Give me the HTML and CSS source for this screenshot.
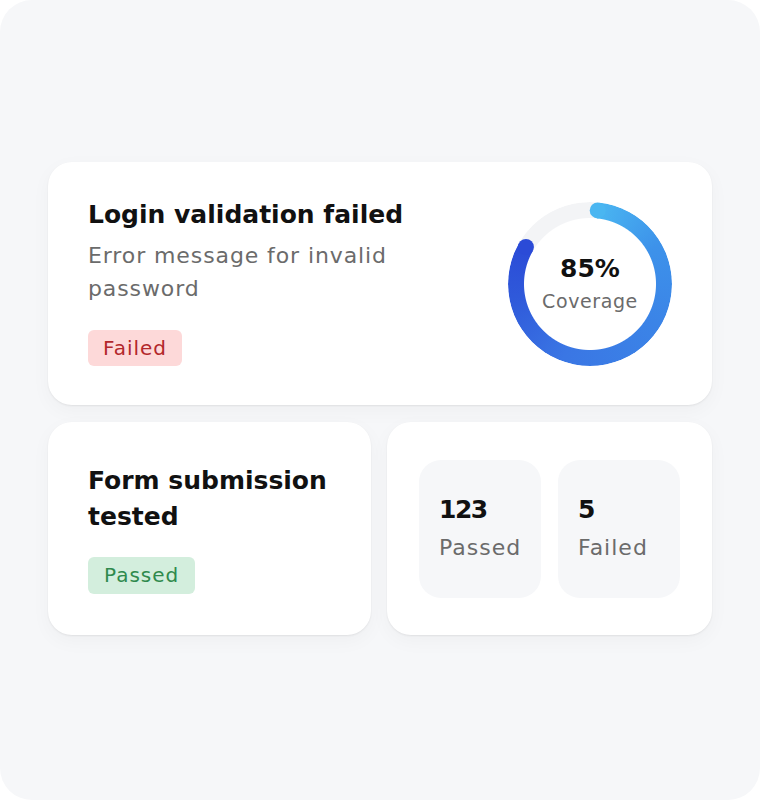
FILE: index.html
```html
<!DOCTYPE html>
<html lang="en">
<head>
<meta charset="utf-8">
<title>Test report</title>
<link rel="stylesheet" href="styles.css">
</head>
<body>
<div class="frame">
  <div class="stack">
    <section class="card card-main">
      <div class="info">
        <h2 class="title">Login validation failed</h2>
        <p class="desc">Error message for invalid password</p>
        <span class="badge badge-fail">Failed</span>
      </div>
      <div class="donut">
        <div class="ring"></div>
        <span class="cap cap-start"></span>
        <span class="cap cap-end"></span>
        <div class="donut-label">
          <span class="pct">85%</span>
          <span class="cov">Coverage</span>
        </div>
      </div>
    </section>
    <div class="row">
      <section class="card card-form">
        <h2 class="title">Form submission tested</h2>
        <span class="badge badge-pass">Passed</span>
      </section>
      <section class="card card-stats">
        <div class="tile">
          <span class="num">123</span>
          <span class="lbl">Passed</span>
        </div>
        <div class="tile">
          <span class="num">5</span>
          <span class="lbl">Failed</span>
        </div>
      </section>
    </div>
  </div>
</div>
</body>
</html>
```

FILE: styles.css
```css
* { box-sizing: border-box; }
html, body { margin: 0; padding: 0; background: #ffffff; }
body { font-family: "DejaVu Sans", "Noto Sans", sans-serif; color: #111111; }

.frame {
  width: 760px;
  height: 800px;
  background: #f6f7f9;
  border-radius: 32px;
  padding: 0 48px;
  display: flex;
  flex-direction: column;
  justify-content: center;
}

.stack { display: flex; flex-direction: column; gap: 17px; margin-top: -3px; }

.card {
  background: #ffffff;
  border-radius: 24px;
  box-shadow: 0 1px 2px rgba(0,0,0,0.07), 0 6px 20px rgba(0,0,0,0.035);
}

.card-main {
  display: flex;
  justify-content: space-between;
  align-items: center;
  padding: 0 40px;
  height: 243px;
}

.info {
  display: flex;
  flex-direction: column;
  align-items: flex-start;
  width: 320px;
  margin-top: -3px;
}

.title {
  margin: 0;
  font-size: 25px;
  line-height: 34px;
  font-weight: 700;
  color: #111111;
}

.desc {
  margin: 7px 0 0;
  font-size: 22px;
  line-height: 33px;
  letter-spacing: 0.9px;
  color: #6b6b6b;
  font-weight: 400;
}

.badge {
  display: inline-block;
  font-size: 20px;
  letter-spacing: 1px;
  line-height: 36px;
  padding: 0 15px;
  border-radius: 6px;
}
.badge-fail { background: #fdd9d9; color: #b3282b; margin-top: 25px; }
.badge-pass { background: #d3eedd; color: #2f8a4d; margin-top: 23px; line-height: 37px; padding: 0 16px; }

.donut { position: relative; width: 164px; height: 164px; flex: none; }
.ring {
  width: 164px;
  height: 164px;
  border-radius: 50%;
  background: conic-gradient(from 0deg,
    #f3f4f6 0deg 6deg,
    #4ab6f1 6deg,
    #3d92ea 60deg,
    #3b84e7 120deg,
    #3a76e4 200deg,
    #2f59da 260deg,
    #2b4bd7 300deg,
    #f3f4f6 300deg 360deg);
  -webkit-mask: radial-gradient(circle, transparent 65.5px, #000 66.5px);
  mask: radial-gradient(circle, transparent 65.5px, #000 66.5px);
}
.cap {
  position: absolute;
  left: 82px;
  top: 0;
  width: 16px;
  height: 16px;
  border-radius: 50%;
}
.cap-start { background: #4ab6f1; transform: translate(calc(74px * 0.1045 - 8px), calc(82px - 74px * 0.9945 - 8px)); }
.cap-end { background: #2b4bd7; transform: translate(calc(74px * -0.866 - 8px), calc(82px - 74px * 0.5 - 8px)); }

.donut-label {
  position: absolute;
  inset: 0;
  display: flex;
  flex-direction: column;
  align-items: center;
  justify-content: center;
}
.pct { font-size: 25px; line-height: 32px; font-weight: 700; color: #111111; margin-bottom: 2px; }
.cov { font-size: 19px; line-height: 28px; letter-spacing: 0.6px; color: #6b6b6b; }

.row { display: grid; grid-template-columns: 1fr 1fr; gap: 16px; }

.card-form {
  height: 213px;
  padding: 41px 40px 0;
  display: flex;
  flex-direction: column;
  align-items: flex-start;
}
.card-form .title { line-height: 36px; }
.card-form .badge { margin-top: 22px; }

.card-stats {
  height: 213px;
  padding: 0 32px;
  display: flex;
  align-items: center;
  gap: 17px;
}
.tile {
  width: 122px;
  height: 138px;
  border-radius: 22px;
  background: #f6f7f9;
  padding: 0 20px;
  display: flex;
  flex-direction: column;
  justify-content: center;
}
.num { font-size: 25px; line-height: 34px; font-weight: 700; letter-spacing: -1.5px; color: #111111; }
.lbl { font-size: 22px; line-height: 33px; letter-spacing: 1px; color: #6b6b6b; margin-top: 4px; }
```
